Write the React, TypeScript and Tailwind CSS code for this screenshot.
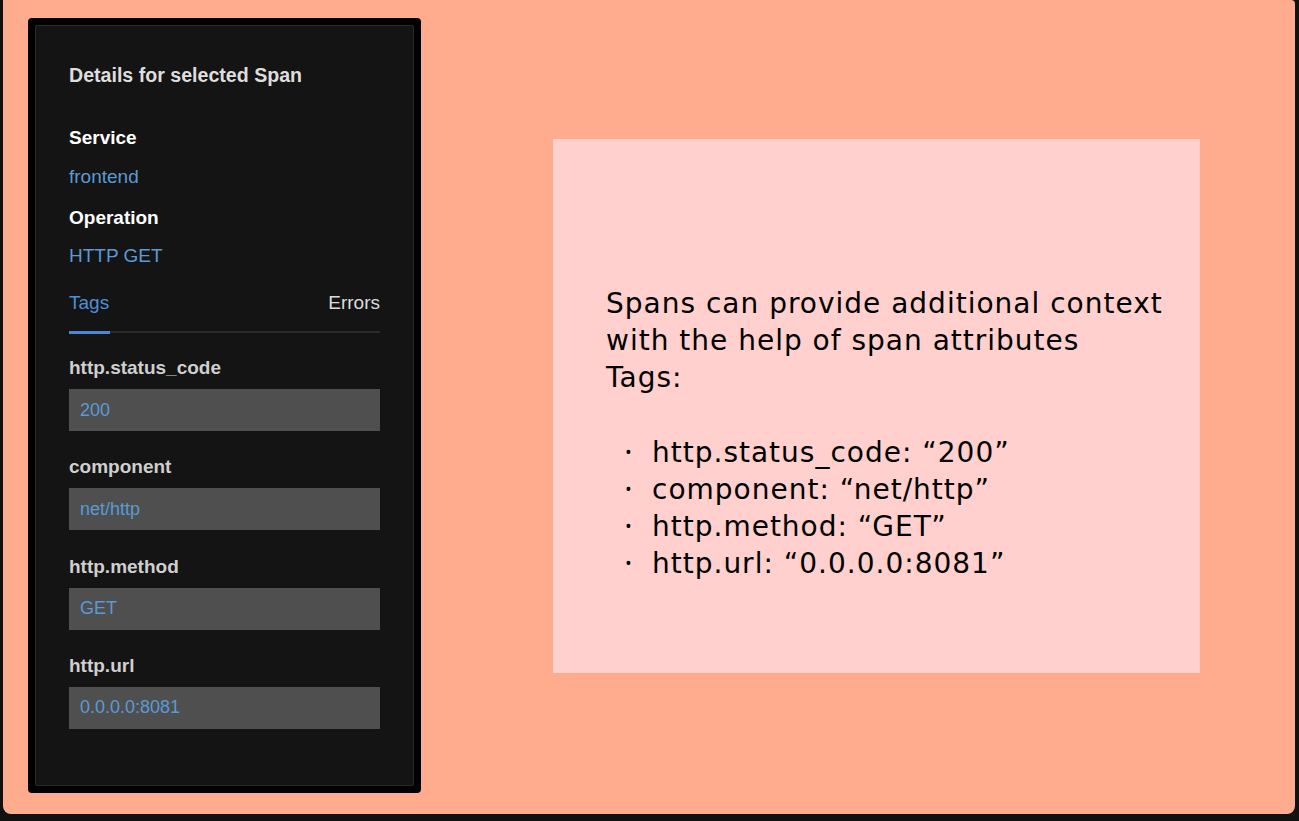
import React from "react";

const tags = [
  { k: "http.status_code", v: "200" },
  { k: "component", v: "net/http" },
  { k: "http.method", v: "GET" },
  { k: "http.url", v: "0.0.0.0:8081" },
];

export default function App() {
  return (
    <div className="w-[1299px] h-[821px] bg-[#111] pl-[3px] pr-[4px] pb-[7px] overflow-hidden">
      <div className="w-full h-full bg-[#ffab8e] rounded-b-[8px] rounded-tr-[4px] flex items-start pl-[25px] pt-[18px]">
        {/* Dark panel */}
        <div className="w-[393px] h-[775px] bg-black rounded-[4px] p-[7px] shrink-0">
          <div className="w-full h-full bg-[#141414] border border-[#2a2a2a] rounded-[2px] pl-[33px] pr-[33px] pt-[37px] flex flex-col font-['Liberation_Sans',Arial,sans-serif]">
            <div className="text-[19.6px] leading-[24px] font-bold text-[#dedede]">Details for selected Span</div>
            <div className="mt-[39px] text-[19px] leading-[24px] font-bold text-white">Service</div>
            <div className="mt-[15px] text-[19px] leading-[24px] text-[#5b9ad4]">frontend</div>
            <div className="mt-[17px] text-[19px] leading-[24px] font-bold text-white">Operation</div>
            <div className="mt-[14px] text-[19px] leading-[24px] text-[#5b9ad4]">HTTP GET</div>
            <div className="mt-[23px] flex flex-col">
              <div className="flex justify-between text-[19px] leading-[24px]">
                <span className="text-[#4f8fd8]">Tags</span>
                <span className="text-[#dcdcdc]">Errors</span>
              </div>
              <div className="mt-[16px] h-[2px] bg-[#2c2c2c] relative">
                <div className="absolute left-0 top-[-0.5px] h-[3px] w-[41px] bg-[#4a86d4]" />
              </div>
            </div>
            <div className="mt-[23px] flex flex-col gap-[24.3px]">
              {tags.map((t) => (
                <div key={t.k} className="flex flex-col">
                  <div className="text-[19px] leading-[24px] font-bold text-[#cfcfcf]">{t.k}</div>
                  <div className="mt-[9px] h-[42px] bg-[#4f4f4f] flex items-center pl-[11px] text-[18px] text-[#5b9ad4]">
                    {t.v}
                  </div>
                </div>
              ))}
            </div>
          </div>
        </div>
        {/* Pink box */}
        <div className="ml-[132px] mt-[121px] w-[647px] h-[534px] bg-[#ffd0cd] flex flex-col pt-[146px] pl-[53px] font-['DejaVu_Sans',sans-serif] text-[28px] leading-[37px] tracking-[1px] text-black">
          <div className="whitespace-nowrap">Spans can provide additional context</div>
          <div className="whitespace-nowrap">with the help of span attributes</div>
          <div>Tags:</div>
          <div className="h-[38px]" />
          <ul className="flex flex-col">
            {tags.map((t) => (
              <li key={t.k} className="flex whitespace-nowrap">
                <span className="w-[46px] pl-[19px] text-[18px] font-['Open_Sans',sans-serif]">•</span>
                <span>{t.k}: “{t.v}”</span>
              </li>
            ))}
          </ul>
        </div>
      </div>
    </div>
  );
}
